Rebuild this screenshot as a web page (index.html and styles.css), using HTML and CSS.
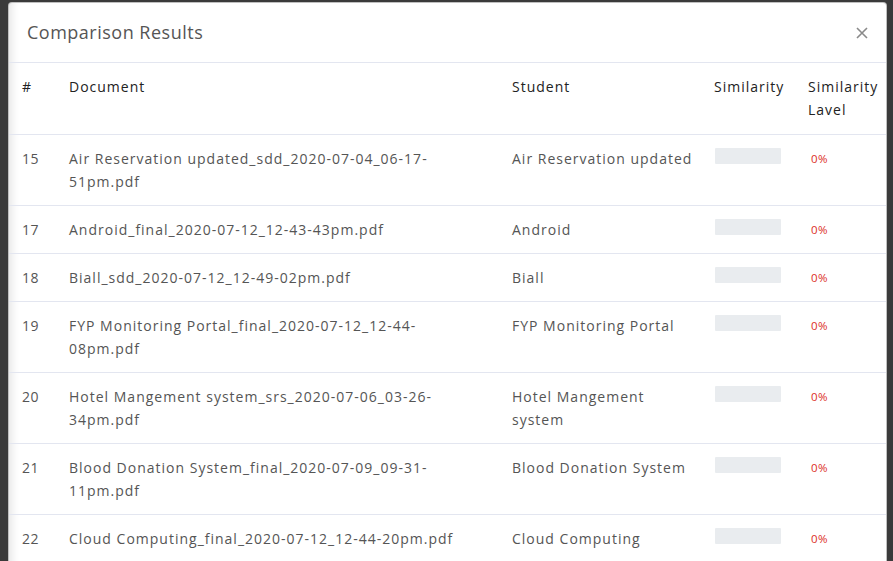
FILE: index.html
```html
<!DOCTYPE html>
<html lang="en">
<head>
<meta charset="utf-8">
<title>Comparison Results</title>
<link rel="stylesheet" href="styles.css">
</head>
<body>
<div class="modal">
  <div class="modal-header">
    <h5 class="modal-title">Comparison Results</h5>
    <button class="close" aria-label="Close">
      <svg width="12" height="12" viewBox="0 0 12 12"><path d="M1 1L11 11M11 1L1 11" stroke="#8a8a8a" stroke-width="1.6" fill="none"/></svg>
    </button>
  </div>
  <table class="results">
    <colgroup>
      <col class="c-num"><col class="c-doc"><col class="c-stu"><col class="c-sim"><col class="c-lvl">
    </colgroup>
    <thead>
      <tr><th>#</th><th>Document</th><th>Student</th><th>Similarity</th><th>Similarity Lavel</th></tr>
    </thead>
    <tbody>
      <tr><td>15</td><td>Air Reservation updated_sdd_2020-07-04_06-17-51pm.pdf</td><td>Air Reservation updated</td><td><div class="bar"></div></td><td><span class="pct">0%</span></td></tr>
      <tr><td>17</td><td>Android_final_2020-07-12_12-43-43pm.pdf</td><td>Android</td><td><div class="bar"></div></td><td><span class="pct">0%</span></td></tr>
      <tr><td>18</td><td>Biall_sdd_2020-07-12_12-49-02pm.pdf</td><td>Biall</td><td><div class="bar"></div></td><td><span class="pct">0%</span></td></tr>
      <tr><td>19</td><td>FYP Monitoring Portal_final_2020-07-12_12-44-08pm.pdf</td><td>FYP Monitoring Portal</td><td><div class="bar"></div></td><td><span class="pct">0%</span></td></tr>
      <tr><td>20</td><td>Hotel Mangement system_srs_2020-07-06_03-26-34pm.pdf</td><td>Hotel Mangement system</td><td><div class="bar"></div></td><td><span class="pct">0%</span></td></tr>
      <tr><td>21</td><td>Blood Donation System_final_2020-07-09_09-31-11pm.pdf</td><td>Blood Donation System</td><td><div class="bar"></div></td><td><span class="pct">0%</span></td></tr>
      <tr><td>22</td><td>Cloud Computing_final_2020-07-12_12-44-20pm.pdf</td><td>Cloud Computing</td><td><div class="bar"></div></td><td><span class="pct">0%</span></td></tr>
    </tbody>
  </table>
</div>
</body>
</html>
```
FILE: styles.css
```css
html, body {
  margin: 0;
  padding: 0;
  height: 100%;
  overflow: hidden;
}
body {
  background: #3a3a3a;
  font-family: "Open Sans", "Liberation Sans", sans-serif;
}
.modal {
  margin: 2px 6px 0 8px;
  background: #fff;
  border: 1px solid rgba(0,0,0,.25);
  border-radius: 4px 4px 0 0;
  height: 600px;
  box-shadow: inset 10px 0 10px -8px rgba(0,0,0,.12);
}
.modal-header {
  display: flex;
  align-items: center;
  justify-content: space-between;
  padding: 16px 18px 16px 18px;
  border-bottom: 1px solid #e3e6f0;
}
.modal-title {
  margin: 0;
  font-size: 18px;
  line-height: 27px;
  font-weight: 400;
  letter-spacing: 0.5px;
  color: #555;
}
.close {
  background: none;
  border: 0;
  padding: 0;
  width: 12px;
  height: 12px;
  display: flex;
}
.results {
  width: 100%;
  border-collapse: collapse;
  table-layout: fixed;
  font-size: 14px;
  line-height: 23px;
  letter-spacing: 1px;
  color: #555;
}
.c-num { width: 47px; }
.c-doc { width: 443px; }
.c-stu { width: 202px; }
.c-sim { width: 94px; }
.results th, .results td {
  padding: 12px 11px 12px 13px;
  text-align: left;
  vertical-align: top;
}
.results th {
  font-weight: 400;
  color: #222;
  padding-bottom: 13px;
}
.results td:first-child, .results th:first-child {
  padding-left: 13px;
  padding-right: 0;
  letter-spacing: 0.6px;
}
.results td:nth-child(2) {
  padding-right: 40px;
}
.results td:nth-child(3) {
  padding-right: 8px;
}
.results tbody tr {
  border-top: 1px solid #e3e6f0;
}
.bar {
  width: 66px;
  height: 16px;
  margin: 1px 0 0 1px;
  background: #e9ecef;
  border-radius: 1px;
}
.pct {
  display: block;
  padding: 1px 0 0 3px;
  line-height: 22px;
  font-size: 11.5px;
  letter-spacing: 0.4px;
  color: #dc2f26;
}
```
